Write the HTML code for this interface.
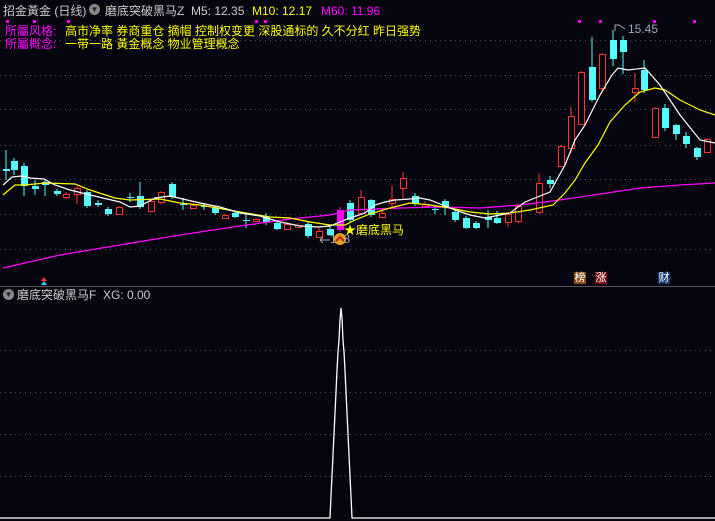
<!DOCTYPE html>
<html><head><meta charset="utf-8"><style>
body{margin:0;width:715px;height:521px;background:#05050f;overflow:hidden;font-family:"Liberation Sans","Noto Sans CJK SC",sans-serif;position:relative}
.t{position:absolute;font-size:12px;white-space:nowrap;line-height:14px}
.b{position:absolute;width:12px;height:12px;font-size:11px;line-height:12px;text-align:center;color:#fff}
</style></head><body>
<svg width="715" height="521" style="position:absolute;left:0;top:0">
<g stroke="#555" stroke-dasharray="1,4" stroke-width="1">
<line x1="0" y1="40.5" x2="715" y2="40.5"/><line x1="0" y1="75.5" x2="715" y2="75.5"/><line x1="0" y1="109.5" x2="715" y2="109.5"/><line x1="0" y1="145.5" x2="715" y2="145.5"/><line x1="0" y1="179.5" x2="715" y2="179.5"/><line x1="0" y1="214.5" x2="715" y2="214.5"/><line x1="0" y1="249.5" x2="715" y2="249.5"/>
<line x1="0" y1="350.5" x2="715" y2="350.5"/><line x1="0" y1="392.5" x2="715" y2="392.5"/><line x1="0" y1="434.5" x2="715" y2="434.5"/><line x1="0" y1="476.5" x2="715" y2="476.5"/>
</g>
<line x1="0" y1="286.5" x2="715" y2="286.5" stroke="#555"/>
<g id="c"></g>
<polyline fill="none" stroke="#ff00ff" stroke-width="1.3" points="3,268 60,255 120,245 180,235 240,226 290,219 330,215 350,210 400,208 440,207 480,208 520,205 560,200 600,194 640,188 680,185 715,183"/>
<polyline fill="none" stroke="#ffff00" stroke-width="1.2" points="3,195 15,185 25,185 45,183 75,184 90,190 115,198 130,200 160,199 180,203 200,205 240,212 270,217 290,218 310,222 330,225 345,225 355,220 370,214 390,208 410,203 430,205 450,208 470,212 490,214 510,213 530,210 553,205 565,193 575,180 585,163 598,145 610,122 625,105 640,92 655,88 665,90 680,100 700,110 715,115"/>
<polyline fill="none" stroke="#fff" stroke-width="1.2" points="3,185 12,177 22,176 30,178 44,179 55,185 70,190 90,195 120,202 130,207 140,206 155,198 170,196 200,203 220,207 240,213 260,216 280,222 300,226 318,227 330,226 350,218 365,213 375,205 385,202 395,200 410,199 420,198 430,200 440,204 455,210 470,215 485,218 500,215 510,213 525,202 550,192 565,165 575,140 585,125 600,95 612,75 618,68 628,70 645,68 660,85 680,115 700,140 715,143"/>
<g fill="#ff00ff"><rect x="578" y="20" width="3" height="3"/><rect x="599" y="20" width="3" height="3"/><rect x="653" y="20" width="3" height="3"/><rect x="693" y="20" width="3" height="3"/><rect x="6" y="20" width="3" height="3"/><rect x="33" y="20" width="3" height="3"/><rect x="67" y="20" width="3" height="3"/><rect x="255" y="20" width="3" height="3"/><rect x="264" y="20" width="3" height="3"/></g>
<path d="M615 31V25h4l6 4" stroke="#aaa" fill="none"/>
<path d="M320 240h10M320 240l3-3M320 240l3 3" stroke="#aaa" fill="none"/>
<circle cx="340" cy="239" r="6" fill="#e8a020"/><path d="M336 241l4-4 4 4" stroke="#c02000" stroke-width="2" fill="none"/>
<path d="M41 281l3-4 3 4z" fill="#f33"/><path d="M41 285l3-4 3 4z" fill="#3cf"/>
<polyline fill="none" stroke="#fff" stroke-width="1.3" points="0,518 330,518 331,496 332,476 333,455 334,434 335,413 336,392 337,370 338,352 339,340 340,320 341,308 342,318 343,340 344,352 345,370 346,392 347,413 348,434 349,455 350,476 351,496 352,518 715,518"/>
</svg>
<div class="t" style="left:3px;top:4px;color:#ccc">招金黃金 (日线)</div>
<div class="t" style="left:89px;top:4px;width:11px;height:11px;border-radius:50%;background:#888;font-size:8px;line-height:11px;text-align:center;color:#222">▼</div>
<div class="t" style="left:105px;top:4px;color:#ccc">磨底突破黑马Z&nbsp; M5: 12.35</div>
<div class="t" style="left:252px;top:4px;color:#ff0">M10: 12.17</div>
<div class="t" style="left:321px;top:4px;color:#f0f">M60: 11.96</div>
<div class="t" style="left:5px;top:24px;color:#f0f">所屬风格:</div>
<div class="t" style="left:65px;top:24px;color:#ff0">高市净率 券商重仓 摘帽 控制权变更 深股通标的 久不分红 昨日强势</div>
<div class="t" style="left:5px;top:37px;color:#f0f">所屬概念:</div>
<div class="t" style="left:65px;top:37px;color:#ff0">一带一路 黃金概念 物业管理概念</div>
<div class="t" style="left:628px;top:22px;color:#9ab">15.45</div>
<div class="t" style="left:330px;top:232px;color:#aaa">1&nbsp;&nbsp;8</div>
<div class="t" style="left:344px;top:223px;color:#ff0">★磨底黑马</div>
<div class="b" style="left:574px;top:272px;background:#8a4a10">榜</div>
<div class="b" style="left:595px;top:272px;background:#7a1010">涨</div>
<div class="b" style="left:658px;top:272px;background:#123a6a">财</div>
<div class="t" style="left:3px;top:289px;width:11px;height:11px;border-radius:50%;background:#888;font-size:8px;line-height:11px;text-align:center;color:#222">▼</div>
<div class="t" style="left:17px;top:288px;color:#ccc">磨底突破黑马F&nbsp; XG: 0.00</div>
<script>
var C=[[3,169,171,150,180,'c'],[11,161,170,158,175,'c'],[21,166,186,163,196,'c'],[32,186,189,180,195,'c'],[42,182,185,179,196,'c'],[54,191,194,189,196,'c'],[63,194,197,192,199,'r'],[74,188,194,186,204,'r'],[84,192,206,190,208,'c'],[95,203,205,200,207,'c'],[105,209,214,207,216,'c'],[116,207,214,206,215,'r'],[127,197,198,193,202,'c'],[137,196,207,182,209,'c'],[148,201,211,199,212,'r'],[158,192,202,191,204,'r'],[169,184,197,182,199,'c'],[180,204,205,198,210,'c'],[190,205,208,204,209,'r'],[201,206,207,203,210,'c'],[212,208,213,206,215,'c'],[222,215,218,214,219,'r'],[232,213,217,211,218,'c'],[243,220,221,214,228,'c'],[253,219,221,218,222,'r'],[263,217,222,213,225,'c'],[274,223,229,221,230,'c'],[284,224,229,222,230,'r'],[295,225,227,223,228,'r'],[305,224,236,222,238,'c'],[316,231,237,228,238,'r'],[327,229,235,225,236,'c'],[337,210,230,207,232,'m'],[347,203,220,200,222,'c'],[358,197,213,190,214,'r'],[368,200,215,199,217,'c'],[379,213,217,208,218,'r'],[389,199,203,185,208,'r'],[400,178,188,172,200,'r'],[412,196,204,193,206,'c'],[422,204,206,201,208,'r'],[432,209,210,206,214,'c'],[442,201,207,199,215,'c'],[452,212,220,210,222,'c'],[463,218,228,216,229,'c'],[473,223,228,221,229,'c'],[485,217,220,210,228,'c'],[494,218,223,211,224,'c'],[505,214,222,212,227,'r'],[515,206,221,203,223,'r'],[536,183,212,173,214,'r'],[547,180,184,176,188,'c'],[558,146,166,145,167,'r'],[568,116,148,107,153,'r'],[578,72,124,71,125,'r'],[589,67,100,37,102,'c'],[599,54,88,53,92,'r'],[610,40,59,30,66,'c'],[620,40,52,36,74,'c'],[632,88,92,73,102,'r'],[641,70,90,60,93,'c'],[652,108,137,107,138,'r'],[662,108,128,104,131,'c'],[673,125,134,124,140,'c'],[683,136,144,132,148,'c'],[694,148,157,147,160,'c'],[704,139,152,138,153,'r']];
var s='';C.forEach(function(k){var x=k[0],w=6,col=k[5]=='c'?'#54fcfc':k[5]=='m'?'#ff00ff':'#ff3232',m=x+w/2;
s+='<line x1="'+m+'" y1="'+k[3]+'" x2="'+m+'" y2="'+k[4]+'" stroke="'+col+'"/>';
var h=Math.max(k[2]-k[1],1);
if(k[5]=='r')s+='<rect x="'+(x+.5)+'" y="'+(k[1]+.5)+'" width="'+w+'" height="'+h+'" fill="#05050f" stroke="'+col+'"/>';
else s+='<rect x="'+x+'" y="'+k[1]+'" width="'+(w+1)+'" height="'+h+'" fill="'+col+'"/>';});
document.getElementById('c').innerHTML=s;
</script>
</body></html>
